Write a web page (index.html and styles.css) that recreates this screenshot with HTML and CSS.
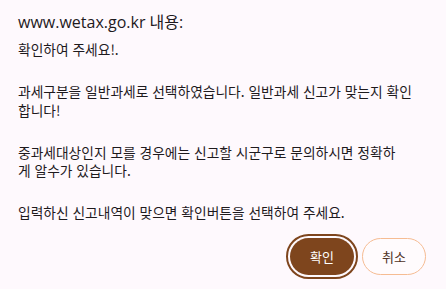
FILE: index.html
```html
<!DOCTYPE html>
<html lang="ko">
<head>
<meta charset="utf-8">
<link rel="stylesheet" href="styles.css">
</head>
<body>
<div class="dialog">
  <div class="title">www.wetax.go.kr 내용:</div>
  <div class="message">
    <p>확인하여 주세요!.</p>
    <p>과세구분을 일반과세로 선택하였습니다. 일반과세 신고가 맞는지 확인<br>합니다!</p>
    <p>중과세대상인지 모를 경우에는 신고할 시군구로 문의하시면 정확하<br>게 알수가 있습니다.</p>
    <p>입력하신 신고내역이 맞으면 확인버튼을 선택하여 주세요.</p>
  </div>
  <div class="actions">
    <button class="btn btn-primary">확인</button>
    <button class="btn btn-secondary">취소</button>
  </div>
</div>
</body>
</html>
```
FILE: styles.css
```css
html, body {
  margin: 0;
  padding: 0;
  background: #fef9fd;
}
.dialog {
  width: 446px;
  height: 289px;
  box-sizing: border-box;
  padding: 12px 20px 14px 18px;
  display: flex;
  flex-direction: column;
  color: #1e1a1d;
  font-family: "Noto Sans CJK KR", "Noto Sans", sans-serif;
}
.title {
  font-family: "Open Sans", "Noto Sans CJK KR", sans-serif;
  font-size: 16px;
  line-height: 20px;
  margin-bottom: 8px;
}
.message {
  font-size: 13.75px;
  line-height: 18.5px;
  white-space: nowrap;
}
.message p {
  margin: 0 0 23.5px 0;
}
.message p:last-child {
  margin-bottom: 0;
}
.actions {
  margin-top: auto;
  display: flex;
  justify-content: flex-end;
  gap: 8px;
}
.btn {
  width: 64px;
  height: 37px;
  border-radius: 19px;
  font-family: "Noto Sans CJK KR", sans-serif;
  font-size: 13px;
  padding: 0;
  box-sizing: border-box;
}
.btn-primary {
  background: #7e451d;
  color: #ffffff;
  border: none;
  outline: 2px solid #7e451d;
  outline-offset: 2px;
}
.btn-secondary {
  background: #fffbfd;
  color: #4f3226;
  border: 1px solid #f6bc93;
}
```
